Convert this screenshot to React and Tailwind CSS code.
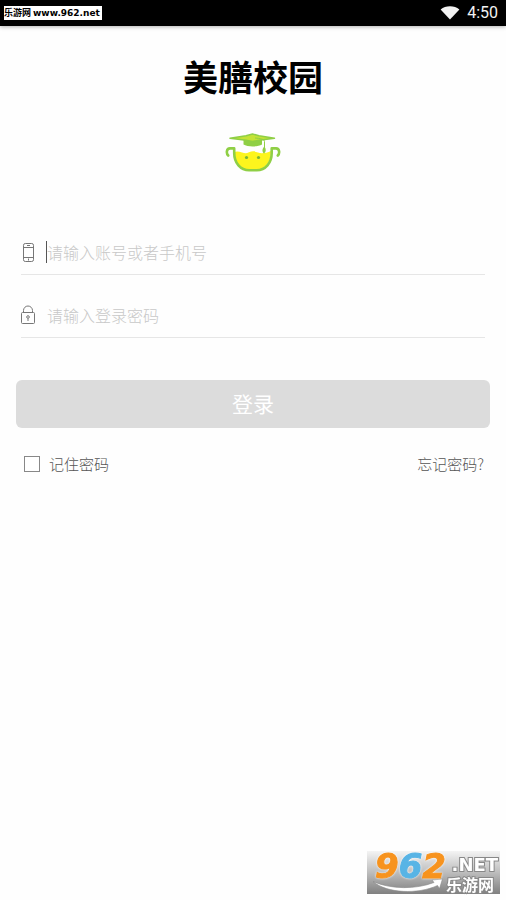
import React, { useState } from 'react';

const WifiIcon = () => (
  <svg viewBox="0 0 20 14" className="w-5 h-3.5" fill="#f2f2f2" aria-hidden="true">
    <path d="M10 13.600 0.600 3.400C3.200 1.200 6.400.2 10 .2s6.800 1 9.400 3.200z" />
  </svg>
);

const PotLogo = () => (
  <svg viewBox="0 0 56 40" className="w-14 h-10" fill="none" aria-hidden="true">
    {/* Pot */}
    <path d="M9 19.500c2-1.600 5-1 8 0s4.500 1 7-.2c3.500-1.500 6-1 9 .2s8 .8 13-1.500c0 12-6 19.500-18.500 19.500S9 31 9 19.500z" fill="#fdf51d" />
    <path d="M3.200 22.500C1.200 20.500 1.200 15.600 5 15.400h4.200v4.600c0 10 6.300 17.200 15 17.200h7.500c8.700 0 15-7.200 15-17.200v-4.600H51c3.800.2 3.800 5.100 1.800 7.100" stroke="#8fcf45" strokeWidth="2.600" strokeLinecap="round" strokeLinejoin="round" />
    <circle cx="21.500" cy="24.500" r="1.600" fill="#79b536" />
    <circle cx="33.500" cy="24.500" r="1.600" fill="#79b536" />
    {/* Cap */}
    <path d="M18.500 7h18.500v4.500c-4 2.500-14.500 2.500-18.500 0z" fill="#8fcf45" />
    <path d="M5 5.200 21 2.700 27.500 1l6.500 1.700 15.500 2.500-15.500 2-6.500 1.300-6.500-1.300z" fill="#c4e335" stroke="#8fcf45" strokeWidth="1.500" strokeLinejoin="round" />
    <path d="M30 5c5 .5 9.500 1 9.500 3.500v7" stroke="#8fcf45" strokeWidth="1" />
    <path d="M39.300 13.500c2 2.500 2 5-.2 7-2.200-1.300-2.200-4.500.2-7z" fill="#8fcf45" />
  </svg>
);

const PhoneIcon = () => (
  <svg viewBox="0 0 14 20" className="w-3.5 h-5" fill="none" stroke="#777" aria-hidden="true">
    <rect x="2.500" y="1.500" width="10" height="18" rx="1.800" />
    <path d="M2.500 5.500h10M2.500 15.500h10M6 3.500h3M7.500 16.500v2" />
  </svg>
);

const LockIcon = () => (
  <svg viewBox="0 0 14 20" className="w-3.5 h-5" fill="none" stroke="#777" aria-hidden="true">
    <rect x="0.500" y="7.500" width="13" height="11" rx="1" />
    <path d="M2.500 7.500V5.500a4.500 4.500 0 0 1 9 0v2M7 13.500v2.500" />
    <circle cx="7" cy="12" r="1.300" />
  </svg>
);

const Field = ({ id, label, icon, type, value, onChange, caret }) => (
  <div className="flex h-[63px] items-end border-b border-[#e6e6e6] pb-[11px]">
    <label htmlFor={id} className="mr-[11px] flex h-[22px] items-center" aria-label={label}>
      {icon}
    </label>
    <input
      id={id}
      type={type}
      value={value}
      onChange={onChange}
      placeholder={label}
      className={`h-[22px] min-w-0 flex-1 border-l text-base font-light text-[#555] outline-none placeholder:text-[#c8c8c8] ${caret ? 'border-[#555]' : 'border-transparent'}`}
    />
  </div>
);

const Watermark = () => (
  <div className="fixed bottom-1.5 right-1.5 flex h-[43px] w-[133px] justify-between whitespace-nowrap bg-linear-to-b from-[#f4f4f4] via-[#bdbdbd] to-[#808080] pl-2 pr-0.5 font-['DejaVu_Sans'] font-bold">
    <svg viewBox="0 0 133 43" className="absolute inset-0 h-full w-full" aria-hidden="true">
      <path d="M6 30.500c18 8 43 8 61 1l-2-2.500 10.500-1-3 9.500-2-3C51 43.500 20 42.500 6 30.500z" fill="#fff" stroke="#888" strokeWidth="0.600" />
    </svg>
    <div className="relative text-[34px] italic leading-[30px] text-[#f7931e] [-webkit-text-stroke:1px_#f7931e] drop-shadow-[0_0_1px_#fff]">
      9<span className="text-[#58b4e5] [-webkit-text-stroke:1px_#58b4e5]">6</span>2
    </div>
    <div className="relative flex flex-col items-end pt-1 text-white [paint-order:stroke] [-webkit-text-stroke:2px_#888]">
      <div className="text-lg leading-5">.NET</div>
      <div className="pr-1 font-['Noto_Sans_CJK_SC'] text-base leading-[18px]">乐游网</div>
    </div>
  </div>
);

const App = () => {
  const [account, setAccount] = useState('');
  const [password, setPassword] = useState('');
  const [remember, setRemember] = useState(false);

  return (
    <div className="min-h-screen bg-[#fefefe] font-['Noto_Sans_CJK_SC',sans-serif]">
      {/* Status bar */}
      <header className="flex h-[26px] items-center justify-between bg-black pl-1 pr-2 shadow-[0_1px_4px_rgba(0,0,0,0.3)]">
        <div className="h-3.5 w-[98px] whitespace-nowrap bg-white text-[9px] font-bold leading-[14px] text-black">
          乐游网 <span className="font-['DejaVu_Sans']">www.962.net</span>
        </div>
        <div className="flex items-center gap-[7px]">
          <WifiIcon />
          <span className="font-['Roboto'] text-base leading-none text-[#f2f2f2]">4:50</span>
        </div>
      </header>

      <main className="px-4 pt-[26px]">
        <h1 className="text-center text-[35px] font-bold leading-[48px] text-black">美膳校园</h1>
        <div className="mt-[33px] flex justify-center">
          <PotLogo />
        </div>

        <form className="mt-[39px]" onSubmit={e => e.preventDefault()}>
          <div className="px-[5px]">
            <Field
              id="account"
              label="请输入账号或者手机号"
              type="text"
              icon={<PhoneIcon />}
              value={account}
              onChange={e => setAccount(e.target.value)}
              caret
            />
            <Field
              id="password"
              label="请输入登录密码"
              type="password"
              icon={<LockIcon />}
              value={password}
              onChange={e => setPassword(e.target.value)}
            />
          </div>

          <button type="submit" className="mt-[42px] h-12 w-full rounded-md bg-[#dcdcdc] text-[21px] text-white">
            登录
          </button>

          <div className="mt-6 flex items-center justify-between pl-2 pr-1.5 text-[15px] font-light leading-6 text-[#555]">
            <label className="flex items-center gap-[9px]">
              <input
                type="checkbox"
                checked={remember}
                onChange={e => setRemember(e.target.checked)}
                className="h-4 w-4 appearance-none border border-[#888] bg-white checked:bg-[#8fcf45]"
              />
              记住密码
            </label>
            <a href="#forgot">忘记密码?</a>
          </div>
        </form>
      </main>

      <Watermark />
    </div>
  );
};

export default App;
